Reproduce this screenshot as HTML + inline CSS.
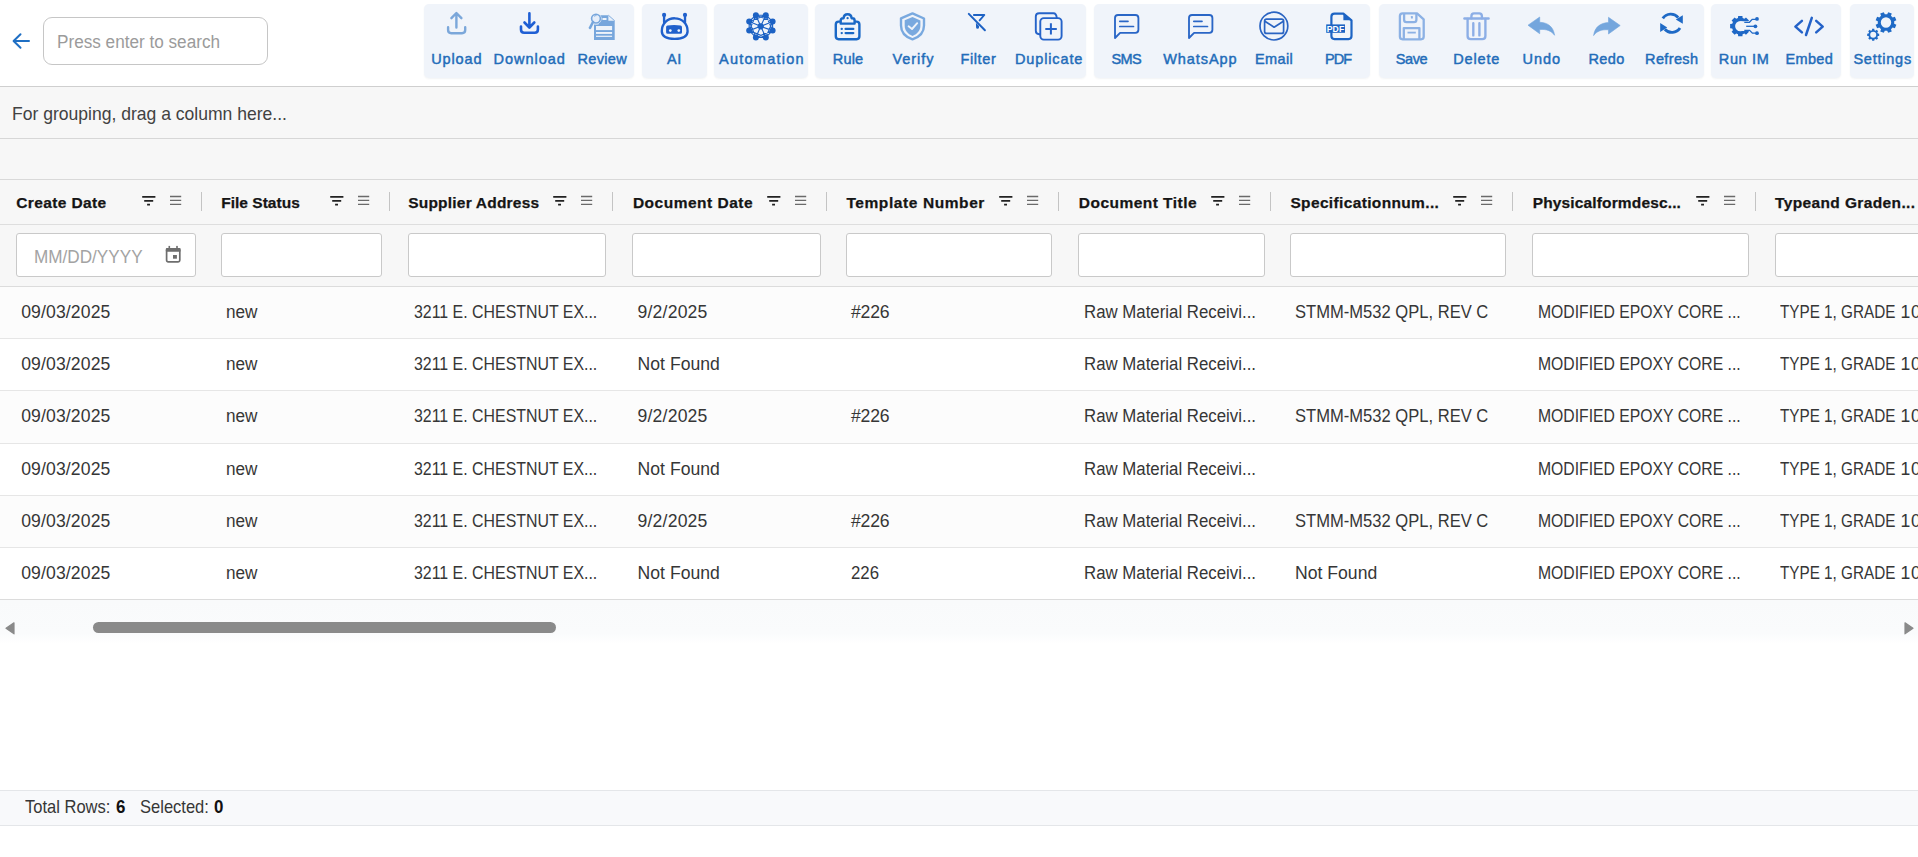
<!DOCTYPE html>
<html><head><meta charset='utf-8'><style>
html,body{margin:0;padding:0;width:1918px;height:857px;overflow:hidden;background:#fff;font-family:"Liberation Sans", sans-serif;}
.t{position:absolute;white-space:pre;line-height:1;}
</style></head><body>
<div style='position:absolute;left:0px;top:86px;width:1918px;height:1px;background:#cfcfcf'></div><div style='position:absolute;left:0px;top:87px;width:1918px;height:51px;background:#f7f7f7'></div><div style='position:absolute;left:0px;top:138px;width:1918px;height:1px;background:#d7d7d7'></div><div style='position:absolute;left:0px;top:139px;width:1918px;height:40px;background:#f7f7f7'></div><div style='position:absolute;left:0px;top:179px;width:1918px;height:1px;background:#d9d9d9'></div><div style='position:absolute;left:0px;top:180px;width:1918px;height:44px;background:#f7f7f7'></div><div style='position:absolute;left:0px;top:224px;width:1918px;height:1px;background:#dedede'></div><div style='position:absolute;left:0px;top:225px;width:1918px;height:61.3px;background:#f7f7f7'></div><div style='position:absolute;left:0px;top:286.3px;width:1918px;height:1px;background:#dcdcdc'></div><div style='position:absolute;left:0px;top:287.3px;width:1918px;height:51.0px;background:#fcfcfc'></div><div style='position:absolute;left:0px;top:338.3px;width:1918px;height:1px;background:#e6e6e6'></div><div style='position:absolute;left:0px;top:339.3px;width:1918px;height:51.099999999999966px;background:#ffffff'></div><div style='position:absolute;left:0px;top:390.4px;width:1918px;height:1px;background:#e6e6e6'></div><div style='position:absolute;left:0px;top:391.4px;width:1918px;height:51.80000000000001px;background:#fcfcfc'></div><div style='position:absolute;left:0px;top:443.2px;width:1918px;height:1px;background:#e6e6e6'></div><div style='position:absolute;left:0px;top:444.2px;width:1918px;height:50.900000000000034px;background:#ffffff'></div><div style='position:absolute;left:0px;top:495.1px;width:1918px;height:1px;background:#e6e6e6'></div><div style='position:absolute;left:0px;top:496.1px;width:1918px;height:51.10000000000002px;background:#fcfcfc'></div><div style='position:absolute;left:0px;top:547.2px;width:1918px;height:1px;background:#e6e6e6'></div><div style='position:absolute;left:0px;top:548.2px;width:1918px;height:50.799999999999955px;background:#ffffff'></div><div style='position:absolute;left:0px;top:599px;width:1918px;height:1px;background:#dcdcdc'></div><div style='position:absolute;left:0px;top:600px;width:1918px;height:44px;background:linear-gradient(#f9fafb 0%,#fafbfc 75%,#ffffff 100%)'></div><div style='position:absolute;left:0px;top:789.5px;width:1918px;height:1px;background:#e4e6e9'></div><div style='position:absolute;left:0px;top:790.5px;width:1918px;height:34.5px;background:#f8f9fb'></div><div style='position:absolute;left:0px;top:825px;width:1918px;height:1px;background:#e4e6e9'></div><div style='position:absolute;left:424.4px;top:4.2px;width:209.39999999999998px;height:74.3px;background:#f0f4fa;border-radius:5px;box-shadow:0 1px 2px rgba(40,60,90,0.06)'></div><div style='position:absolute;left:642.4px;top:4.2px;width:65.10000000000002px;height:74.3px;background:#f0f4fa;border-radius:5px;box-shadow:0 1px 2px rgba(40,60,90,0.06)'></div><div style='position:absolute;left:713.8px;top:4.2px;width:94.0px;height:74.3px;background:#f0f4fa;border-radius:5px;box-shadow:0 1px 2px rgba(40,60,90,0.06)'></div><div style='position:absolute;left:815.3px;top:4.2px;width:271.20000000000005px;height:74.3px;background:#f0f4fa;border-radius:5px;box-shadow:0 1px 2px rgba(40,60,90,0.06)'></div><div style='position:absolute;left:1094.4px;top:4.2px;width:276.0999999999999px;height:74.3px;background:#f0f4fa;border-radius:5px;box-shadow:0 1px 2px rgba(40,60,90,0.06)'></div><div style='position:absolute;left:1379.2px;top:4.2px;width:325.0px;height:74.3px;background:#f0f4fa;border-radius:5px;box-shadow:0 1px 2px rgba(40,60,90,0.06)'></div><div style='position:absolute;left:1711.4px;top:4.2px;width:129.29999999999995px;height:74.3px;background:#f0f4fa;border-radius:5px;box-shadow:0 1px 2px rgba(40,60,90,0.06)'></div><div style='position:absolute;left:1849.8px;top:4.2px;width:63.90000000000009px;height:74.3px;background:#f0f4fa;border-radius:5px;box-shadow:0 1px 2px rgba(40,60,90,0.06)'></div><div style='position:absolute;left:43px;top:17px;width:225px;height:48px;box-sizing:border-box;border:1px solid #c6c6c6;border-radius:9px;background:#fff'></div><div style='position:absolute;left:16.2px;top:233.2px;width:179.5px;height:44.3px;box-sizing:border-box;border:1px solid #c9c9c9;border-radius:3px;background:#fff'></div><div style='position:absolute;left:221.2px;top:233.2px;width:161.2px;height:44.3px;box-sizing:border-box;border:1px solid #c9c9c9;border-radius:3px;background:#fff'></div><div style='position:absolute;left:408.2px;top:233.2px;width:198.3px;height:44.3px;box-sizing:border-box;border:1px solid #c9c9c9;border-radius:3px;background:#fff'></div><div style='position:absolute;left:632.4px;top:233.2px;width:188.20000000000005px;height:44.3px;box-sizing:border-box;border:1px solid #c9c9c9;border-radius:3px;background:#fff'></div><div style='position:absolute;left:846.4px;top:233.2px;width:206.0000000000001px;height:44.3px;box-sizing:border-box;border:1px solid #c9c9c9;border-radius:3px;background:#fff'></div><div style='position:absolute;left:1078.3px;top:233.2px;width:186.29999999999995px;height:44.3px;box-sizing:border-box;border:1px solid #c9c9c9;border-radius:3px;background:#fff'></div><div style='position:absolute;left:1290.4px;top:233.2px;width:215.89999999999986px;height:44.3px;box-sizing:border-box;border:1px solid #c9c9c9;border-radius:3px;background:#fff'></div><div style='position:absolute;left:1532.3px;top:233.2px;width:217.20000000000005px;height:44.3px;box-sizing:border-box;border:1px solid #c9c9c9;border-radius:3px;background:#fff'></div><div style='position:absolute;left:1775px;top:233.2px;width:155px;height:44.3px;box-sizing:border-box;border:1px solid #c9c9c9;border-radius:3px;background:#fff'></div><div style='position:absolute;left:200.9px;top:192px;width:1px;height:18.7px;background:#c4c4c4'></div><div style='position:absolute;left:388.5px;top:192px;width:1px;height:18.7px;background:#c4c4c4'></div><div style='position:absolute;left:611.8px;top:192px;width:1px;height:18.7px;background:#c4c4c4'></div><div style='position:absolute;left:826.0px;top:192px;width:1px;height:18.7px;background:#c4c4c4'></div><div style='position:absolute;left:1057.8px;top:192px;width:1px;height:18.7px;background:#c4c4c4'></div><div style='position:absolute;left:1270.0px;top:192px;width:1px;height:18.7px;background:#c4c4c4'></div><div style='position:absolute;left:1512.1px;top:192px;width:1px;height:18.7px;background:#c4c4c4'></div><div style='position:absolute;left:1754.9px;top:192px;width:1px;height:18.7px;background:#c4c4c4'></div>
<svg style='position:absolute;left:11px;top:31px' width='20' height='20' viewBox='0 0 20 20'>
<path d='M18 10 H3 M9.5 3.2 L2.6 10 L9.5 16.8' stroke='#1f6fc4' stroke-width='2' fill='none' stroke-linecap='round' stroke-linejoin='round'/></svg>
<svg style='position:absolute;left:164px;top:244px' width='18' height='20' viewBox='0 0 18 20'>
<rect x='2.6' y='4.8' width='13.2' height='13' rx='1.6' fill='none' stroke='#6e6e6e' stroke-width='1.7'/>
<rect x='1.8' y='3.9' width='14.8' height='3.8' rx='1' fill='#6e6e6e'/>
<rect x='4.5' y='1.9' width='1.6' height='3' fill='#6e6e6e'/><rect x='12.2' y='1.9' width='1.6' height='3' fill='#6e6e6e'/>
<rect x='9' y='11' width='3.9' height='3.7' fill='#6e6e6e'/></svg>
<svg style='position:absolute;left:141.9px;top:195px' width='14' height='11' viewBox='0 0 14 11'><path d='M0.2 1.9h13.2M2.2 5.8h9M5.1 9.6h2.9' stroke='#222' stroke-width='1.8' fill='none'/></svg><svg style='position:absolute;left:169.9px;top:195px' width='12' height='11' viewBox='0 0 12 11'><path d='M0 1.5h11.2M0 5.4h11.2M0 9.3h11.2' stroke='#6a6a6a' stroke-width='1.3' fill='none'/></svg><svg style='position:absolute;left:329.5px;top:195px' width='14' height='11' viewBox='0 0 14 11'><path d='M0.2 1.9h13.2M2.2 5.8h9M5.1 9.6h2.9' stroke='#222' stroke-width='1.8' fill='none'/></svg><svg style='position:absolute;left:357.5px;top:195px' width='12' height='11' viewBox='0 0 12 11'><path d='M0 1.5h11.2M0 5.4h11.2M0 9.3h11.2' stroke='#6a6a6a' stroke-width='1.3' fill='none'/></svg><svg style='position:absolute;left:552.8px;top:195px' width='14' height='11' viewBox='0 0 14 11'><path d='M0.2 1.9h13.2M2.2 5.8h9M5.1 9.6h2.9' stroke='#222' stroke-width='1.8' fill='none'/></svg><svg style='position:absolute;left:580.8px;top:195px' width='12' height='11' viewBox='0 0 12 11'><path d='M0 1.5h11.2M0 5.4h11.2M0 9.3h11.2' stroke='#6a6a6a' stroke-width='1.3' fill='none'/></svg><svg style='position:absolute;left:767.0px;top:195px' width='14' height='11' viewBox='0 0 14 11'><path d='M0.2 1.9h13.2M2.2 5.8h9M5.1 9.6h2.9' stroke='#222' stroke-width='1.8' fill='none'/></svg><svg style='position:absolute;left:795.0px;top:195px' width='12' height='11' viewBox='0 0 12 11'><path d='M0 1.5h11.2M0 5.4h11.2M0 9.3h11.2' stroke='#6a6a6a' stroke-width='1.3' fill='none'/></svg><svg style='position:absolute;left:998.8px;top:195px' width='14' height='11' viewBox='0 0 14 11'><path d='M0.2 1.9h13.2M2.2 5.8h9M5.1 9.6h2.9' stroke='#222' stroke-width='1.8' fill='none'/></svg><svg style='position:absolute;left:1026.8px;top:195px' width='12' height='11' viewBox='0 0 12 11'><path d='M0 1.5h11.2M0 5.4h11.2M0 9.3h11.2' stroke='#6a6a6a' stroke-width='1.3' fill='none'/></svg><svg style='position:absolute;left:1211.0px;top:195px' width='14' height='11' viewBox='0 0 14 11'><path d='M0.2 1.9h13.2M2.2 5.8h9M5.1 9.6h2.9' stroke='#222' stroke-width='1.8' fill='none'/></svg><svg style='position:absolute;left:1239.0px;top:195px' width='12' height='11' viewBox='0 0 12 11'><path d='M0 1.5h11.2M0 5.4h11.2M0 9.3h11.2' stroke='#6a6a6a' stroke-width='1.3' fill='none'/></svg><svg style='position:absolute;left:1453.1px;top:195px' width='14' height='11' viewBox='0 0 14 11'><path d='M0.2 1.9h13.2M2.2 5.8h9M5.1 9.6h2.9' stroke='#222' stroke-width='1.8' fill='none'/></svg><svg style='position:absolute;left:1481.1px;top:195px' width='12' height='11' viewBox='0 0 12 11'><path d='M0 1.5h11.2M0 5.4h11.2M0 9.3h11.2' stroke='#6a6a6a' stroke-width='1.3' fill='none'/></svg><svg style='position:absolute;left:1695.9px;top:195px' width='14' height='11' viewBox='0 0 14 11'><path d='M0.2 1.9h13.2M2.2 5.8h9M5.1 9.6h2.9' stroke='#222' stroke-width='1.8' fill='none'/></svg><svg style='position:absolute;left:1723.9px;top:195px' width='12' height='11' viewBox='0 0 12 11'><path d='M0 1.5h11.2M0 5.4h11.2M0 9.3h11.2' stroke='#6a6a6a' stroke-width='1.3' fill='none'/></svg>

<svg style='position:absolute;left:5px;top:622px' width='10' height='13' viewBox='0 0 10 13'><path d='M9 0.8 L1 6.3 L9 11.8 Z' fill='#8a8a8a' stroke='#8a8a8a' stroke-width='1.2' stroke-linejoin='round'/></svg>
<div style='position:absolute;left:93.3px;top:622px;width:462.7px;height:11px;border-radius:6px;background:#8a8a8a'></div>
<svg style='position:absolute;left:1903.5px;top:622px' width='10' height='13' viewBox='0 0 10 13'><path d='M1 0.8 L9 6.3 L1 11.8 Z' fill='#8a8a8a' stroke='#8a8a8a' stroke-width='1.2' stroke-linejoin='round'/></svg>

<svg style='position:absolute;left:443px;top:9px;overflow:visible' width='28' height='28' viewBox='0 0 28 28'><g fill='none' stroke='#7ba7da' stroke-width='2.4' stroke-linecap='round' stroke-linejoin='round'><path d='M13.4 4.2V18.6M8.4 9.2L13.4 4L18.4 9.2'/><path d='M5.1 18.3V21Q5.1 24.2 8.3 24.2H19Q22.2 24.2 22.2 21V18.3'/></g></svg>
<svg style='position:absolute;left:515px;top:9px;overflow:visible' width='28' height='28' viewBox='0 0 28 28'><g fill='none' stroke='#1f5fd4' stroke-width='2.6' stroke-linecap='round' stroke-linejoin='round'><path d='M14.4 4.2V18M9.5 13.5L14.4 18.5L19.3 13.5'/><path d='M6 17.6V20.6Q6 23.8 9.2 23.8H19.7Q22.9 23.8 22.9 20.6V17.6'/></g></svg>
<svg style='position:absolute;left:586px;top:10px;overflow:visible' width='32' height='32' viewBox='0 0 32 32'><path d='M12.5 5.2H22.4L28.7 10.8V29.9H8V14.5H12.5Z' fill='#77a6dc'/>
<path d='M22.4 5.2V10.8H28.7Z' fill='#e8f0fa'/><path d='M22.4 5.2L28.7 10.8' stroke='#77a6dc' stroke-width='0.8'/>
<rect x='10' y='16' width='16.1' height='4.1' fill='#eef3fa'/><rect x='10' y='22' width='16.1' height='1.9' fill='#eef3fa'/><rect x='10' y='25.7' width='16.1' height='1.2' fill='#eef3fa'/>
<rect x='16.5' y='8' width='4' height='2' fill='#eef3fa'/>
<circle cx='10' cy='8.6' r='5.6' fill='#eef3fa'/>
<circle cx='10' cy='8.6' r='4.4' fill='#e6eefa' stroke='#77a6dc' stroke-width='1.6'/>
<path d='M7 12L4 17.8' stroke='#77a6dc' stroke-width='2.6' stroke-linecap='round'/>
<path d='M8 6.3Q9 5.5 10.5 5.6' stroke='#77a6dc' stroke-width='0.9' fill='none'/></svg>
<svg style='position:absolute;left:658px;top:10px;overflow:visible' width='34' height='34' viewBox='0 0 34 34'><g fill='none' stroke='#2060cc' stroke-width='2.35' stroke-linecap='round'>
<path d='M16.7 8.3C24 8.3 29.6 13.5 29.6 21.3C29.6 26.6 24.2 28.9 16.7 28.9C9.2 28.9 3.8 26.6 3.8 21.3C3.8 13.5 9.4 8.3 16.7 8.3Z'/>
<path d='M6.1 5.2V12.3M27 5.2V12.3'/></g>
<circle cx='6.1' cy='4.9' r='2.1' fill='#2060cc'/><circle cx='27' cy='4.9' r='2.1' fill='#2060cc'/>
<path d='M9.5 15.6Q16.2 14.2 22.5 15.6Q24 15.9 24 17.4V22.3Q24 23.8 22.5 23.8H9.6Q8.1 23.8 8.1 22.3V17.2Q8.1 15.9 9.5 15.6Z' fill='#2060cc'/>
<circle cx='12.3' cy='20.6' r='1.35' fill='#eef3fa'/><circle cx='20.8' cy='20.6' r='1.35' fill='#eef3fa'/></svg>
<svg style='position:absolute;left:744px;top:10px;overflow:visible' width='34' height='34' viewBox='0 0 34 34'><path d='M11.9 5.2L21.8 5.2M11.9 5.2L28.6 11.5M11.9 5.2L16.7 16.3M21.8 5.2L28.6 11.5M21.8 5.2L28.6 20.6M21.8 5.2L16.7 16.3M28.6 11.5L28.6 20.6M28.6 11.5L21.8 27.4M28.6 11.5L16.7 16.3M28.6 20.6L21.8 27.4M28.6 20.6L11.9 27.4M28.6 20.6L16.7 16.3M21.8 27.4L11.9 27.4M21.8 27.4L5.2 20.6M21.8 27.4L16.7 16.3M11.9 27.4L5.2 20.6M11.9 27.4L5.2 11.5M11.9 27.4L16.7 16.3M5.2 20.6L5.2 11.5M5.2 20.6L11.9 5.2M5.2 20.6L16.7 16.3M5.2 11.5L11.9 5.2M5.2 11.5L21.8 5.2M5.2 11.5L16.7 16.3' stroke='#1c62c4' stroke-width='1.15' fill='none'/><circle cx='11.9' cy='5.2' r='3.0' fill='#1c62c4'/><circle cx='21.8' cy='5.2' r='3.0' fill='#1c62c4'/><circle cx='28.6' cy='11.5' r='3.0' fill='#1c62c4'/><circle cx='28.6' cy='20.6' r='3.0' fill='#1c62c4'/><circle cx='21.8' cy='27.4' r='3.0' fill='#1c62c4'/><circle cx='11.9' cy='27.4' r='3.0' fill='#1c62c4'/><circle cx='5.2' cy='20.6' r='3.0' fill='#1c62c4'/><circle cx='5.2' cy='11.5' r='3.0' fill='#1c62c4'/><circle cx='16.7' cy='16.3' r='3.1' fill='#1c62c4'/></svg>
<svg style='position:absolute;left:828px;top:10px;overflow:visible' width='42' height='34' viewBox='0 0 42 34'><g fill='none' stroke='#1a68c6' stroke-width='2.4' stroke-linejoin='round'>
<path d='M12.5 11.6H10.6Q7.8 11.6 7.8 14.5V26.3Q7.8 29.2 10.6 29.2H28.6Q31.4 29.2 31.4 26.3V14.5Q31.4 11.6 28.6 11.6H26.8'/>
<path d='M12.7 13.6V10.4Q12.7 8.2 15 8.2H15.6Q15.9 4.2 19.6 4.2Q23.3 4.2 23.6 8.2H24.3Q26.6 8.2 26.6 10.4V13.6Z'/></g>
<circle cx='19.6' cy='8.2' r='1.15' fill='#1a68c6'/>
<g stroke='#1a68c6' stroke-width='2.3' stroke-linecap='round'><path d='M13.7 18.9H13.8M13.7 23.1H13.8M17.6 18.9H25.3M17.6 23.1H25.3'/></g></svg>
<svg style='position:absolute;left:895px;top:10px;overflow:visible' width='34' height='34' viewBox='0 0 34 34'><path d='M17.5 3.4L29 8.5V15.5C29 22 24.5 27 17.5 29.4C10.5 27 6 22 6 15.5V8.3Z' fill='none' stroke='#79a9df' stroke-width='2.4' stroke-linejoin='round'/>
<path d='M17.5 7.1L25.4 10.5V15.8C25.4 20.5 22.4 24 17.5 25.9C12.6 24 9.7 20.5 9.7 15.8V10.3Z' fill='#79a9df'/>
<path d='M13.6 16.3L17 19L22.2 13.2' fill='none' stroke='#eef3fa' stroke-width='1.9' stroke-linecap='round' stroke-linejoin='round'/></svg>
<svg style='position:absolute;left:964px;top:10px;overflow:visible' width='26' height='26' viewBox='0 0 26 26'><path d='M4.8 3.9L20.9 20.3' stroke='#1e62c4' stroke-width='2' stroke-linecap='round'/>
<path d='M9.9 5H20.3L15.6 10.4' stroke='#1e62c4' stroke-width='1.9' fill='none' stroke-linecap='round' stroke-linejoin='round'/>
<path d='M11.9 12.8L15 16V17.6Q15 18.8 13.5 18.8Q12.1 18.8 12.1 17.6Z' fill='#1e62c4'/></svg>
<svg style='position:absolute;left:1031px;top:10px;overflow:visible' width='34' height='34' viewBox='0 0 34 34'><g fill='none' stroke='#2563c9' stroke-width='1.9' stroke-linejoin='round'>
<path d='M9.3 24.2H8.2Q4.8 24.2 4.8 20.8V6.6Q4.8 3.2 8.2 3.2H22.4Q25.4 3.2 25.8 8.1'/>
<rect x='9.3' y='8.1' width='21.3' height='21.5' rx='3.5'/>
<path d='M14.3 19H25.8M19.9 13.3V24.6' stroke-width='2'/></g></svg>
<svg style='position:absolute;left:1110px;top:10px;overflow:visible' width='34' height='34' viewBox='0 0 34 34'><g fill='none' stroke='#2a66c6' stroke-width='1.85' stroke-linejoin='round' stroke-linecap='round'>
<path d='M10.1 22.8H25.4Q28.4 22.8 28.4 19.8V8Q28.4 5 25.4 5H8Q5 5 5 8V28Z'/>
<path d='M9.8 11.3H18M9.8 16.5H23.5' stroke-width='1.7'/></g></svg>
<svg style='position:absolute;left:1184px;top:10px;overflow:visible' width='34' height='34' viewBox='0 0 34 34'><g fill='none' stroke='#2a66c6' stroke-width='1.85' stroke-linejoin='round' stroke-linecap='round'>
<path d='M10.1 22.8H25.4Q28.4 22.8 28.4 19.8V8Q28.4 5 25.4 5H8Q5 5 5 8V28Z'/>
<path d='M9.8 11.3H18M9.8 16.5H23.5' stroke-width='1.7'/></g></svg>
<svg style='position:absolute;left:1257px;top:9px;overflow:visible' width='34' height='34' viewBox='0 0 34 34'><g fill='none' stroke='#2a64c2' stroke-width='1.7' stroke-linejoin='round'>
<circle cx='16.9' cy='17.1' r='13.9'/>
<rect x='7.6' y='10.2' width='19' height='14.2' rx='2'/>
<path d='M7.8 12.3L17.1 18.2L26.4 12.3'/></g></svg>
<svg style='position:absolute;left:1322px;top:10px;overflow:visible' width='34' height='34' viewBox='0 0 34 34'><path d='M21.4 3.7H12.5Q9.4 3.7 9.4 6.8V26.1Q9.4 29.1 12.5 29.1H26.5Q29.5 29.1 29.5 26.1V10.3Z' fill='none' stroke='#1d64c4' stroke-width='2.2' stroke-linejoin='round'/>
<path d='M21.4 3.7V10.3H29.5Z' fill='#1d64c4'/>
<rect x='4.2' y='14.4' width='18.8' height='8.4' fill='#1d64c4'/>
<text x='13.6' y='21.8' text-anchor='middle' font-family='Liberation Sans' font-weight='700' font-size='8.6' fill='#fff' letter-spacing='0.2'>PDF</text></svg>
<svg style='position:absolute;left:1396px;top:10px;overflow:visible' width='34' height='34' viewBox='0 0 34 34'><g fill='none' stroke='#8cb1e4' stroke-width='2.3' stroke-linejoin='round'>
<path d='M6.6 3.4H21L27.7 9.3V26.6Q27.7 29.3 25 29.3H6.6Q3.9 29.3 3.9 26.6V6.1Q3.9 3.4 6.6 3.4Z'/>
<path d='M8.1 3.6V9.8Q8.1 12.2 10.5 12.2H18Q20.4 12.2 20.4 9.8V3.6'/>
<path d='M7.8 28.9V18.1H23.4V28.9'/>
<path d='M11.5 22.6H19.8' stroke-width='1.8'/></g>
<rect x='14.9' y='6' width='2' height='2.6' rx='0.6' fill='#8cb1e4'/></svg>
<svg style='position:absolute;left:1460px;top:9px;overflow:visible' width='34' height='34' viewBox='0 0 34 34'><g fill='none' stroke='#8caee6' stroke-width='2.35' stroke-linecap='round' stroke-linejoin='round'>
<path d='M4.4 9.5H28.6'/><path d='M11.4 9.3V7.2Q11.4 4.4 14 4.4H19.3Q21.9 4.4 21.9 7.2V9.3'/>
<path d='M7.6 10V26.9Q7.6 30.1 10.8 30.1H22.2Q25.4 30.1 25.4 26.9V10'/>
<path d='M13.3 14.2V26.4M19.4 14.2V26.4'/></g></svg>
<svg style='position:absolute;left:1524px;top:9px;overflow:visible' width='34' height='34' viewBox='0 0 34 34'><path d='M4 16.2L15.7 8V13.3C23.5 13.5 29.4 17.5 30.6 26.3C27.5 21.8 22.4 20 15.7 20.5V24.7Z' fill='#74a6dd' stroke='#74a6dd' stroke-width='0.6' stroke-linejoin='round'/></svg>
<svg style='position:absolute;left:1590px;top:9px;overflow:visible' width='34' height='34' viewBox='0 0 34 34'><g transform='translate(34.5 0) scale(-1 1)'><path d='M4 16.2L15.7 8V13.3C23.5 13.5 29.4 17.5 30.6 26.3C27.5 21.8 22.4 20 15.7 20.5V24.7Z' fill='#74a6dd' stroke='#74a6dd' stroke-width='0.6' stroke-linejoin='round' transform='translate(0.3 0.3)'/></g></svg>
<svg style='position:absolute;left:1655px;top:8px;overflow:visible' width='34' height='34' viewBox='0 0 34 34'><g fill='none' stroke='#1f6ac6' stroke-width='2.9'>
<path d='M7.8 10.4A9.6 9.6 0 0 1 23.2 9.6'/><path d='M25 20A9.6 9.6 0 0 1 9.8 21.2'/></g>
<path d='M27.8 7.3V15.8L20.8 11.6Z' fill='#1f6ac6'/><path d='M5.2 15.1V23.9L12.2 19.5Z' fill='#1f6ac6'/></svg>
<svg style='position:absolute;left:1726px;top:9px;overflow:visible' width='36' height='34' viewBox='0 0 36 34'><defs><clipPath id='ccut'><path d='M0 0H36V34H0Z M15 12.3H40V21.9H15Z' clip-rule='evenodd'/></clipPath></defs>
<path d='M22.37 14.78 L24.48 14.96 L24.48 19.24 L22.37 19.42 L21.65 21.17 L23.01 22.79 L19.99 25.81 L18.37 24.45 L16.62 25.17 L16.44 27.28 L12.16 27.28 L11.98 25.17 L10.23 24.45 L8.61 25.81 L5.59 22.79 L6.95 21.17 L6.23 19.42 L4.12 19.24 L4.12 14.96 L6.23 14.78 L6.95 13.03 L5.59 11.41 L8.61 8.39 L10.23 9.75 L11.98 9.03 L12.16 6.92 L16.44 6.92 L16.62 9.03 L18.37 9.75 L19.99 8.39 L23.01 11.41 L21.65 13.03 Z M19.50 17.10 A5.2 5.2 0 1 0 9.10 17.10 A5.2 5.2 0 1 0 19.50 17.10 Z' fill='#1f68c6' fill-rule='evenodd' clip-path='url(#ccut)'/>
<g fill='none' stroke='#1f68c6' stroke-width='1.3'><path d='M18.3 13.3H23.4L26.2 10.3H31'/><path d='M20.2 17.3H29.4'/><path d='M18.3 21.4H23.6L26.4 24.2H31'/></g>
<circle cx='31' cy='9.9' r='1.9' fill='#1f68c6'/><circle cx='29.4' cy='17.3' r='1.9' fill='#1f68c6'/><circle cx='31' cy='24.2' r='1.9' fill='#1f68c6'/></svg>
<svg style='position:absolute;left:1790px;top:9px;overflow:visible' width='38' height='34' viewBox='0 0 38 34'><g fill='none' stroke='#2462c8' stroke-width='2.5' stroke-linecap='round' stroke-linejoin='round'>
<path d='M11.9 11.9L5.4 17.6L11.9 23.4'/><path d='M21.8 8.9L16 26'/><path d='M26.2 11.9L32.7 17.6L26.2 23.4'/></g></svg>
<svg style='position:absolute;left:1864px;top:9px;overflow:visible' width='36' height='34' viewBox='0 0 36 34'><path d='M28.65 8.54 L30.89 7.72 L32.37 11.30 L30.21 12.31 L30.21 14.69 L32.37 15.70 L30.89 19.28 L28.65 18.46 L26.96 20.15 L27.78 22.39 L24.20 23.87 L23.19 21.71 L20.81 21.71 L19.80 23.87 L16.22 22.39 L17.04 20.15 L15.35 18.46 L13.11 19.28 L11.63 15.70 L13.79 14.69 L13.79 12.31 L11.63 11.30 L13.11 7.72 L15.35 8.54 L17.04 6.85 L16.22 4.61 L19.80 3.13 L20.81 5.29 L23.19 5.29 L24.20 3.13 L27.78 4.61 L26.96 6.85 Z M27.20 13.50 A5.2 5.2 0 1 0 16.80 13.50 A5.2 5.2 0 1 0 27.20 13.50 Z' fill='#1f6ac6' fill-rule='evenodd'/><path d='M13.85 24.62 L15.20 24.69 L15.20 26.91 L13.85 26.98 L13.32 28.26 L14.23 29.25 L12.65 30.83 L11.66 29.92 L10.38 30.45 L10.31 31.80 L8.09 31.80 L8.02 30.45 L6.74 29.92 L5.75 30.83 L4.17 29.25 L5.08 28.26 L4.55 26.98 L3.20 26.91 L3.20 24.69 L4.55 24.62 L5.08 23.34 L4.17 22.35 L5.75 20.77 L6.74 21.68 L8.02 21.15 L8.09 19.80 L10.31 19.80 L10.38 21.15 L11.66 21.68 L12.65 20.77 L14.23 22.35 L13.32 23.34 Z M12.20 25.80 A3.0 3.0 0 1 0 6.20 25.80 A3.0 3.0 0 1 0 12.20 25.80 Z' fill='#1f6ac6' fill-rule='evenodd'/></svg>

<div class='t' style='left:431.20px;top:51.53px;font-size:14.5px;font-weight:400;color:#226cb9;letter-spacing:0.869px;-webkit-text-stroke:0.45px #226cb9;'>Upload</div><div class='t' style='left:493.50px;top:51.53px;font-size:14.5px;font-weight:400;color:#226cb9;letter-spacing:0.986px;-webkit-text-stroke:0.45px #226cb9;'>Download</div><div class='t' style='left:577.50px;top:51.53px;font-size:14.5px;font-weight:400;color:#226cb9;letter-spacing:0.311px;-webkit-text-stroke:0.45px #226cb9;'>Review</div><div class='t' style='left:667.00px;top:51.53px;font-size:14.5px;font-weight:400;color:#226cb9;letter-spacing:0.497px;-webkit-text-stroke:0.45px #226cb9;'>AI</div><div class='t' style='left:719.00px;top:51.53px;font-size:14.5px;font-weight:400;color:#226cb9;letter-spacing:1.249px;-webkit-text-stroke:0.45px #226cb9;'>Automation</div><div class='t' style='left:832.70px;top:51.53px;font-size:14.5px;font-weight:400;color:#226cb9;letter-spacing:0.224px;-webkit-text-stroke:0.45px #226cb9;'>Rule</div><div class='t' style='left:892.40px;top:51.53px;font-size:14.5px;font-weight:400;color:#226cb9;letter-spacing:0.967px;-webkit-text-stroke:0.45px #226cb9;'>Verify</div><div class='t' style='left:960.40px;top:51.53px;font-size:14.5px;font-weight:400;color:#226cb9;letter-spacing:0.633px;-webkit-text-stroke:0.45px #226cb9;'>Filter</div><div class='t' style='left:1014.90px;top:51.53px;font-size:14.5px;font-weight:400;color:#226cb9;letter-spacing:0.881px;-webkit-text-stroke:0.45px #226cb9;'>Duplicate</div><div class='t' style='left:1111.60px;top:51.53px;font-size:14.5px;font-weight:400;color:#226cb9;letter-spacing:-0.711px;-webkit-text-stroke:0.45px #226cb9;'>SMS</div><div class='t' style='left:1163.20px;top:51.53px;font-size:14.5px;font-weight:400;color:#226cb9;letter-spacing:0.942px;-webkit-text-stroke:0.45px #226cb9;'>WhatsApp</div><div class='t' style='left:1255.00px;top:51.53px;font-size:14.5px;font-weight:400;color:#226cb9;letter-spacing:0.359px;-webkit-text-stroke:0.45px #226cb9;'>Email</div><div class='t' style='left:1325.00px;top:51.53px;font-size:14.5px;font-weight:400;color:#226cb9;letter-spacing:-0.900px;-webkit-text-stroke:0.45px #226cb9;'>PDF</div><div class='t' style='left:1395.70px;top:51.53px;font-size:14.5px;font-weight:400;color:#226cb9;letter-spacing:-0.388px;-webkit-text-stroke:0.45px #226cb9;'>Save</div><div class='t' style='left:1453.30px;top:51.53px;font-size:14.5px;font-weight:400;color:#226cb9;letter-spacing:0.836px;-webkit-text-stroke:0.45px #226cb9;'>Delete</div><div class='t' style='left:1522.50px;top:51.53px;font-size:14.5px;font-weight:400;color:#226cb9;letter-spacing:0.943px;-webkit-text-stroke:0.45px #226cb9;'>Undo</div><div class='t' style='left:1588.40px;top:51.53px;font-size:14.5px;font-weight:400;color:#226cb9;letter-spacing:0.443px;-webkit-text-stroke:0.45px #226cb9;'>Redo</div><div class='t' style='left:1645.10px;top:51.53px;font-size:14.5px;font-weight:400;color:#226cb9;letter-spacing:0.353px;-webkit-text-stroke:0.45px #226cb9;'>Refresh</div><div class='t' style='left:1718.75px;top:51.53px;font-size:14.5px;font-weight:400;color:#226cb9;letter-spacing:0.660px;-webkit-text-stroke:0.45px #226cb9;'>Run IM</div><div class='t' style='left:1785.50px;top:51.53px;font-size:14.5px;font-weight:400;color:#226cb9;letter-spacing:0.337px;-webkit-text-stroke:0.45px #226cb9;'>Embed</div><div class='t' style='left:1853.40px;top:51.53px;font-size:14.5px;font-weight:400;color:#226cb9;letter-spacing:0.771px;-webkit-text-stroke:0.45px #226cb9;'>Settings</div><div class='t' style='left:57.20px;top:33.16px;font-size:18px;font-weight:400;color:#9b9b9b;letter-spacing:0.000px;transform:scaleX(0.9527);transform-origin:0 0;'>Press enter to search</div><div class='t' style='left:12.10px;top:104.59px;font-size:18.2px;font-weight:400;color:#424242;letter-spacing:0.000px;transform:scaleX(0.9645);transform-origin:0 0;'>For grouping, drag a column here...</div><div class='t' style='left:16.20px;top:195.28px;font-size:15.5px;font-weight:700;color:#151515;letter-spacing:0.384px;-webkit-text-stroke:0.25px #151515;'>Create Date</div><div class='t' style='left:221.20px;top:195.28px;font-size:15.5px;font-weight:700;color:#151515;letter-spacing:0.021px;-webkit-text-stroke:0.25px #151515;'>File Status</div><div class='t' style='left:408.20px;top:195.28px;font-size:15.5px;font-weight:700;color:#151515;letter-spacing:0.209px;-webkit-text-stroke:0.25px #151515;'>Supplier Address</div><div class='t' style='left:632.90px;top:195.28px;font-size:15.5px;font-weight:700;color:#151515;letter-spacing:0.501px;-webkit-text-stroke:0.25px #151515;'>Document Date</div><div class='t' style='left:846.40px;top:195.28px;font-size:15.5px;font-weight:700;color:#151515;letter-spacing:0.587px;-webkit-text-stroke:0.25px #151515;'>Template Number</div><div class='t' style='left:1078.80px;top:195.28px;font-size:15.5px;font-weight:700;color:#151515;letter-spacing:0.471px;-webkit-text-stroke:0.25px #151515;'>Document Title</div><div class='t' style='left:1290.40px;top:195.28px;font-size:15.5px;font-weight:700;color:#151515;letter-spacing:0.355px;-webkit-text-stroke:0.25px #151515;'>Specificationnum...</div><div class='t' style='left:1532.70px;top:195.28px;font-size:15.5px;font-weight:700;color:#151515;letter-spacing:0.145px;-webkit-text-stroke:0.25px #151515;'>Physicalformdesc...</div><div class='t' style='left:1775.00px;top:195.28px;font-size:15.5px;font-weight:700;color:#151515;letter-spacing:0.376px;-webkit-text-stroke:0.25px #151515;'>Typeand Graden...</div><div class='t' style='left:34.00px;top:248.59px;font-size:17.5px;font-weight:400;color:#a3a3a3;letter-spacing:0.000px;transform:scaleX(0.9796);transform-origin:0 0;'>MM/DD/YYYY</div><div class='t' style='left:21.20px;top:303.90px;font-size:17.6px;font-weight:400;color:#363636;letter-spacing:0.126px;'>09/03/2025</div><div class='t' style='left:226.00px;top:303.90px;font-size:17.6px;font-weight:400;color:#363636;letter-spacing:0.000px;transform:scaleX(0.9758);transform-origin:0 0;'>new</div><div class='t' style='left:413.60px;top:303.90px;font-size:17.6px;font-weight:400;color:#363636;letter-spacing:0.000px;transform:scaleX(0.9041);transform-origin:0 0;'>3211 E. CHESTNUT EX...</div><div class='t' style='left:637.50px;top:303.90px;font-size:17.6px;font-weight:400;color:#363636;letter-spacing:0.200px;'>9/2/2025</div><div class='t' style='left:851.00px;top:303.90px;font-size:17.6px;font-weight:400;color:#363636;letter-spacing:-0.180px;'>#226</div><div class='t' style='left:1083.50px;top:303.90px;font-size:17.6px;font-weight:400;color:#363636;letter-spacing:0.000px;transform:scaleX(0.9561);transform-origin:0 0;'>Raw Material Receivi...</div><div class='t' style='left:1294.90px;top:303.90px;font-size:17.6px;font-weight:400;color:#363636;letter-spacing:0.000px;transform:scaleX(0.9415);transform-origin:0 0;'>STMM-M532 QPL, REV C</div><div class='t' style='left:1538.10px;top:303.90px;font-size:17.6px;font-weight:400;color:#363636;letter-spacing:0.000px;transform:scaleX(0.8950);transform-origin:0 0;'>MODIFIED EPOXY CORE ...</div><div class='t' style='left:1780.00px;top:303.90px;font-size:17.6px;font-weight:400;color:#363636;letter-spacing:0.000px;transform:scaleX(0.8679);transform-origin:0 0;'>TYPE 1, GRADE</div><div class='t' style='left:1900.50px;top:303.90px;font-size:17.6px;font-weight:400;color:#363636;letter-spacing:0.000px;letter-spacing:0.6px;'>10</div><div class='t' style='left:21.20px;top:355.90px;font-size:17.6px;font-weight:400;color:#363636;letter-spacing:0.126px;'>09/03/2025</div><div class='t' style='left:226.00px;top:355.90px;font-size:17.6px;font-weight:400;color:#363636;letter-spacing:0.000px;transform:scaleX(0.9758);transform-origin:0 0;'>new</div><div class='t' style='left:413.60px;top:355.90px;font-size:17.6px;font-weight:400;color:#363636;letter-spacing:0.000px;transform:scaleX(0.9041);transform-origin:0 0;'>3211 E. CHESTNUT EX...</div><div class='t' style='left:637.50px;top:355.90px;font-size:17.6px;font-weight:400;color:#363636;letter-spacing:0.030px;'>Not Found</div><div class='t' style='left:1083.50px;top:355.90px;font-size:17.6px;font-weight:400;color:#363636;letter-spacing:0.000px;transform:scaleX(0.9561);transform-origin:0 0;'>Raw Material Receivi...</div><div class='t' style='left:1538.10px;top:355.90px;font-size:17.6px;font-weight:400;color:#363636;letter-spacing:0.000px;transform:scaleX(0.8950);transform-origin:0 0;'>MODIFIED EPOXY CORE ...</div><div class='t' style='left:1780.00px;top:355.90px;font-size:17.6px;font-weight:400;color:#363636;letter-spacing:0.000px;transform:scaleX(0.8679);transform-origin:0 0;'>TYPE 1, GRADE</div><div class='t' style='left:1900.50px;top:355.90px;font-size:17.6px;font-weight:400;color:#363636;letter-spacing:0.000px;letter-spacing:0.6px;'>10</div><div class='t' style='left:21.20px;top:408.00px;font-size:17.6px;font-weight:400;color:#363636;letter-spacing:0.126px;'>09/03/2025</div><div class='t' style='left:226.00px;top:408.00px;font-size:17.6px;font-weight:400;color:#363636;letter-spacing:0.000px;transform:scaleX(0.9758);transform-origin:0 0;'>new</div><div class='t' style='left:413.60px;top:408.00px;font-size:17.6px;font-weight:400;color:#363636;letter-spacing:0.000px;transform:scaleX(0.9041);transform-origin:0 0;'>3211 E. CHESTNUT EX...</div><div class='t' style='left:637.50px;top:408.00px;font-size:17.6px;font-weight:400;color:#363636;letter-spacing:0.200px;'>9/2/2025</div><div class='t' style='left:851.00px;top:408.00px;font-size:17.6px;font-weight:400;color:#363636;letter-spacing:-0.180px;'>#226</div><div class='t' style='left:1083.50px;top:408.00px;font-size:17.6px;font-weight:400;color:#363636;letter-spacing:0.000px;transform:scaleX(0.9561);transform-origin:0 0;'>Raw Material Receivi...</div><div class='t' style='left:1294.90px;top:408.00px;font-size:17.6px;font-weight:400;color:#363636;letter-spacing:0.000px;transform:scaleX(0.9415);transform-origin:0 0;'>STMM-M532 QPL, REV C</div><div class='t' style='left:1538.10px;top:408.00px;font-size:17.6px;font-weight:400;color:#363636;letter-spacing:0.000px;transform:scaleX(0.8950);transform-origin:0 0;'>MODIFIED EPOXY CORE ...</div><div class='t' style='left:1780.00px;top:408.00px;font-size:17.6px;font-weight:400;color:#363636;letter-spacing:0.000px;transform:scaleX(0.8679);transform-origin:0 0;'>TYPE 1, GRADE</div><div class='t' style='left:1900.50px;top:408.00px;font-size:17.6px;font-weight:400;color:#363636;letter-spacing:0.000px;letter-spacing:0.6px;'>10</div><div class='t' style='left:21.20px;top:460.80px;font-size:17.6px;font-weight:400;color:#363636;letter-spacing:0.126px;'>09/03/2025</div><div class='t' style='left:226.00px;top:460.80px;font-size:17.6px;font-weight:400;color:#363636;letter-spacing:0.000px;transform:scaleX(0.9758);transform-origin:0 0;'>new</div><div class='t' style='left:413.60px;top:460.80px;font-size:17.6px;font-weight:400;color:#363636;letter-spacing:0.000px;transform:scaleX(0.9041);transform-origin:0 0;'>3211 E. CHESTNUT EX...</div><div class='t' style='left:637.50px;top:460.80px;font-size:17.6px;font-weight:400;color:#363636;letter-spacing:0.030px;'>Not Found</div><div class='t' style='left:1083.50px;top:460.80px;font-size:17.6px;font-weight:400;color:#363636;letter-spacing:0.000px;transform:scaleX(0.9561);transform-origin:0 0;'>Raw Material Receivi...</div><div class='t' style='left:1538.10px;top:460.80px;font-size:17.6px;font-weight:400;color:#363636;letter-spacing:0.000px;transform:scaleX(0.8950);transform-origin:0 0;'>MODIFIED EPOXY CORE ...</div><div class='t' style='left:1780.00px;top:460.80px;font-size:17.6px;font-weight:400;color:#363636;letter-spacing:0.000px;transform:scaleX(0.8679);transform-origin:0 0;'>TYPE 1, GRADE</div><div class='t' style='left:1900.50px;top:460.80px;font-size:17.6px;font-weight:400;color:#363636;letter-spacing:0.000px;letter-spacing:0.6px;'>10</div><div class='t' style='left:21.20px;top:512.70px;font-size:17.6px;font-weight:400;color:#363636;letter-spacing:0.126px;'>09/03/2025</div><div class='t' style='left:226.00px;top:512.70px;font-size:17.6px;font-weight:400;color:#363636;letter-spacing:0.000px;transform:scaleX(0.9758);transform-origin:0 0;'>new</div><div class='t' style='left:413.60px;top:512.70px;font-size:17.6px;font-weight:400;color:#363636;letter-spacing:0.000px;transform:scaleX(0.9041);transform-origin:0 0;'>3211 E. CHESTNUT EX...</div><div class='t' style='left:637.50px;top:512.70px;font-size:17.6px;font-weight:400;color:#363636;letter-spacing:0.200px;'>9/2/2025</div><div class='t' style='left:851.00px;top:512.70px;font-size:17.6px;font-weight:400;color:#363636;letter-spacing:-0.180px;'>#226</div><div class='t' style='left:1083.50px;top:512.70px;font-size:17.6px;font-weight:400;color:#363636;letter-spacing:0.000px;transform:scaleX(0.9561);transform-origin:0 0;'>Raw Material Receivi...</div><div class='t' style='left:1294.90px;top:512.70px;font-size:17.6px;font-weight:400;color:#363636;letter-spacing:0.000px;transform:scaleX(0.9415);transform-origin:0 0;'>STMM-M532 QPL, REV C</div><div class='t' style='left:1538.10px;top:512.70px;font-size:17.6px;font-weight:400;color:#363636;letter-spacing:0.000px;transform:scaleX(0.8950);transform-origin:0 0;'>MODIFIED EPOXY CORE ...</div><div class='t' style='left:1780.00px;top:512.70px;font-size:17.6px;font-weight:400;color:#363636;letter-spacing:0.000px;transform:scaleX(0.8679);transform-origin:0 0;'>TYPE 1, GRADE</div><div class='t' style='left:1900.50px;top:512.70px;font-size:17.6px;font-weight:400;color:#363636;letter-spacing:0.000px;letter-spacing:0.6px;'>10</div><div class='t' style='left:21.20px;top:564.80px;font-size:17.6px;font-weight:400;color:#363636;letter-spacing:0.126px;'>09/03/2025</div><div class='t' style='left:226.00px;top:564.80px;font-size:17.6px;font-weight:400;color:#363636;letter-spacing:0.000px;transform:scaleX(0.9758);transform-origin:0 0;'>new</div><div class='t' style='left:413.60px;top:564.80px;font-size:17.6px;font-weight:400;color:#363636;letter-spacing:0.000px;transform:scaleX(0.9041);transform-origin:0 0;'>3211 E. CHESTNUT EX...</div><div class='t' style='left:637.50px;top:564.80px;font-size:17.6px;font-weight:400;color:#363636;letter-spacing:0.030px;'>Not Found</div><div class='t' style='left:851.00px;top:564.80px;font-size:17.6px;font-weight:400;color:#363636;letter-spacing:0.000px;transform:scaleX(0.9537);transform-origin:0 0;'>226</div><div class='t' style='left:1083.50px;top:564.80px;font-size:17.6px;font-weight:400;color:#363636;letter-spacing:0.000px;transform:scaleX(0.9561);transform-origin:0 0;'>Raw Material Receivi...</div><div class='t' style='left:1294.90px;top:564.80px;font-size:17.6px;font-weight:400;color:#363636;letter-spacing:0.030px;'>Not Found</div><div class='t' style='left:1538.10px;top:564.80px;font-size:17.6px;font-weight:400;color:#363636;letter-spacing:0.000px;transform:scaleX(0.8950);transform-origin:0 0;'>MODIFIED EPOXY CORE ...</div><div class='t' style='left:1780.00px;top:564.80px;font-size:17.6px;font-weight:400;color:#363636;letter-spacing:0.000px;transform:scaleX(0.8679);transform-origin:0 0;'>TYPE 1, GRADE</div><div class='t' style='left:1900.50px;top:564.80px;font-size:17.6px;font-weight:400;color:#363636;letter-spacing:0.000px;letter-spacing:0.6px;'>10</div><div class='t' style='left:24.70px;top:798.39px;font-size:18.2px;font-weight:400;color:#363636;letter-spacing:0.000px;transform:scaleX(0.9085);transform-origin:0 0;'>Total Rows:</div><div class='t' style='left:116.40px;top:798.39px;font-size:18.2px;font-weight:700;color:#111;letter-spacing:0.000px;transform:scaleX(0.9284);transform-origin:0 0;'>6</div><div class='t' style='left:139.50px;top:798.39px;font-size:18.2px;font-weight:400;color:#363636;letter-spacing:0.000px;transform:scaleX(0.9084);transform-origin:0 0;'>Selected:</div><div class='t' style='left:214.00px;top:798.39px;font-size:18.2px;font-weight:700;color:#111;letter-spacing:0.000px;transform:scaleX(0.9284);transform-origin:0 0;'>0</div>
</body></html>
